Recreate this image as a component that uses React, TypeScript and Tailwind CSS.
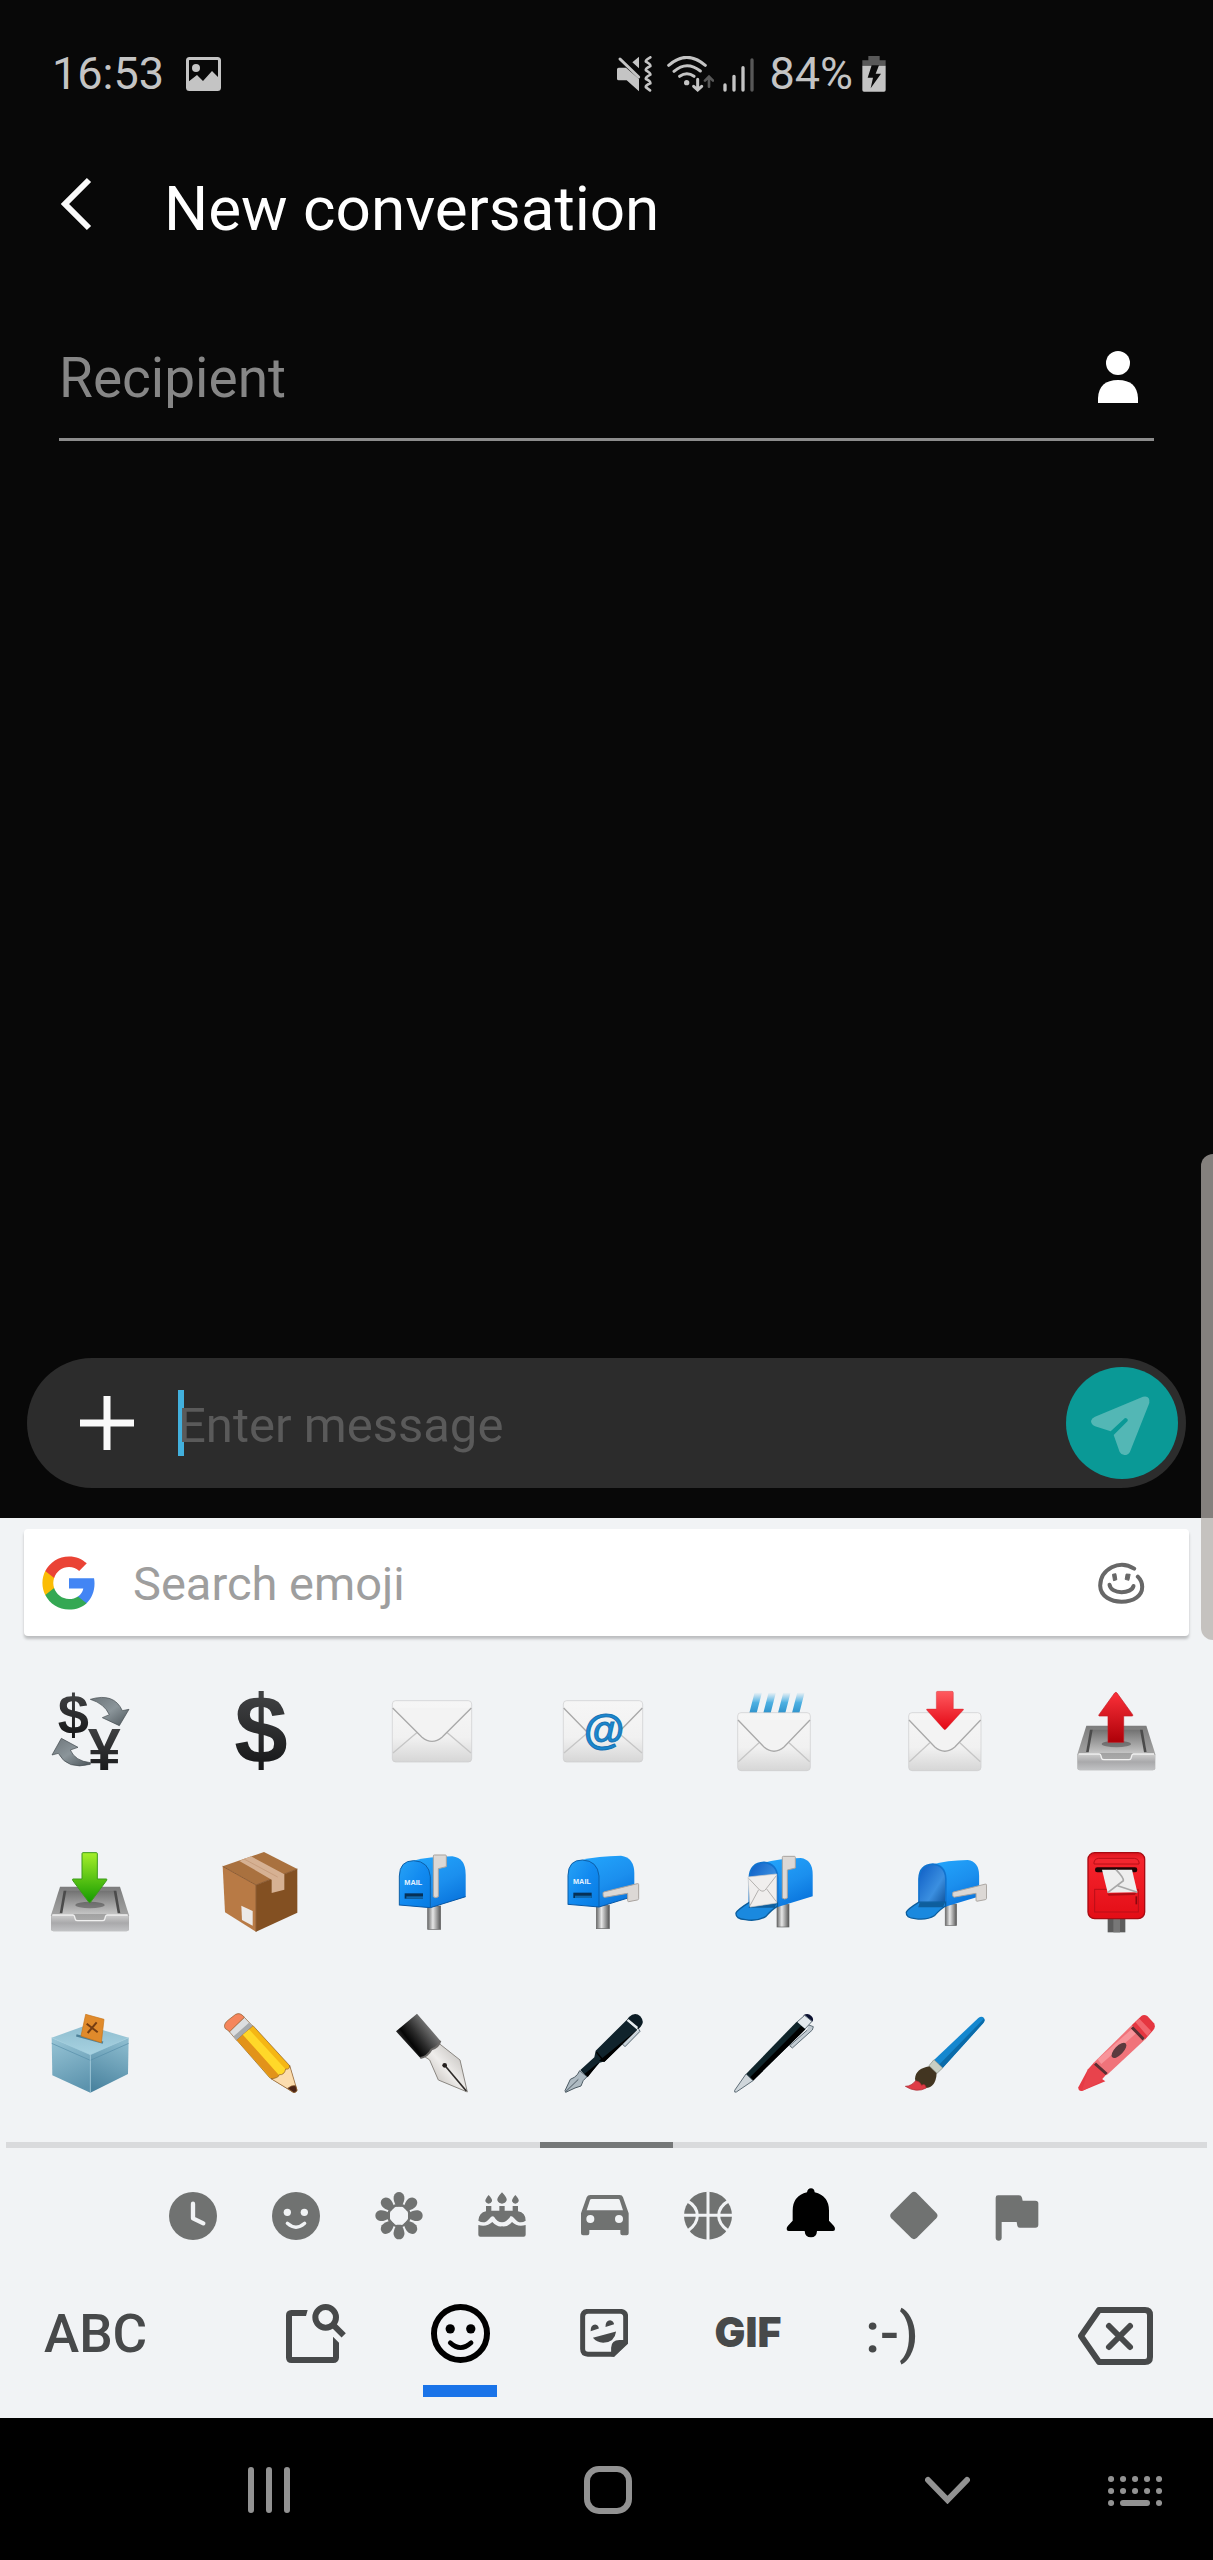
import React from "react";

type Drawing = { name: string; box: string; art: React.ReactNode };

/* Gradients shared by the emoji drawings */
function Gradients() {
  return (
    <svg className="absolute size-0" aria-hidden="true">
      <defs>
        <linearGradient id="ink" x1="0" y1="0" x2="0" y2="1">
          <stop offset="0" stopColor="#4a4b4d" />
          <stop offset="1" stopColor="#0e0f10" />
        </linearGradient>
        <linearGradient id="steel" x1="0" y1="0" x2="1" y2="1">
          <stop offset="0" stopColor="#6d757a" />
          <stop offset="0.5" stopColor="#8b959a" />
          <stop offset="1" stopColor="#4c555a" />
        </linearGradient>
        <linearGradient id="paper" x1="0" y1="0" x2="0" y2="1">
          <stop offset="0" stopColor="#f6f6f6" />
          <stop offset="0.6" stopColor="#f1f1f1" />
          <stop offset="1" stopColor="#d6d6d6" />
        </linearGradient>
        <linearGradient id="red" x1="0" y1="0" x2="0" y2="1">
          <stop offset="0" stopColor="#ff5a5f" />
          <stop offset="1" stopColor="#e30613" />
        </linearGradient>
        <linearGradient id="redUp" x1="0" y1="0" x2="0" y2="1">
          <stop offset="0" stopColor="#fb3039" />
          <stop offset="1" stopColor="#ad0008" />
        </linearGradient>
        <linearGradient id="green" x1="0" y1="0" x2="0" y2="1">
          <stop offset="0" stopColor="#a5ef2a" />
          <stop offset="1" stopColor="#149a00" />
        </linearGradient>
        <linearGradient id="tray" x1="0" y1="0" x2="0" y2="1">
          <stop offset="0" stopColor="#7c7c7c" />
          <stop offset="1" stopColor="#b9b9b9" />
        </linearGradient>
        <linearGradient id="trayFront" x1="0" y1="0" x2="0" y2="1">
          <stop offset="0" stopColor="#cfcfcf" />
          <stop offset="0.5" stopColor="#a9a9ab" />
          <stop offset="1" stopColor="#c2c3c5" />
        </linearGradient>
        <linearGradient id="trayIn" x1="0" y1="0" x2="0" y2="1">
          <stop offset="0" stopColor="#717171" />
          <stop offset="1" stopColor="#c4c4c4" />
        </linearGradient>
        <linearGradient id="blue" x1="0" y1="0" x2="1" y2="1">
          <stop offset="0" stopColor="#27a3f6" />
          <stop offset="0.5" stopColor="#128af0" />
          <stop offset="1" stopColor="#067be2" />
        </linearGradient>
        <linearGradient id="blueSide" x1="0.3" y1="0" x2="0.8" y2="1">
          <stop offset="0" stopColor="#22a2fa" />
          <stop offset="0.5" stopColor="#1b8fee" />
          <stop offset="1" stopColor="#0670da" />
        </linearGradient>
        <linearGradient id="blueIn" x1="0" y1="0" x2="1" y2="1">
          <stop offset="0" stopColor="#0c5cc4" />
          <stop offset="0.6" stopColor="#3b8fe0" />
          <stop offset="1" stopColor="#0a4c94" />
        </linearGradient>
        <linearGradient id="post" x1="0" y1="0" x2="1" y2="0">
          <stop offset="0" stopColor="#6a6a6a" />
          <stop offset="0.4" stopColor="#e6e6e6" />
          <stop offset="1" stopColor="#555" />
        </linearGradient>
        <linearGradient id="rain" x1="0" y1="0" x2="0" y2="1">
          <stop offset="0" stopColor="#4fb3e6" stopOpacity="0" />
          <stop offset="0.5" stopColor="#4db0e2" />
          <stop offset="1" stopColor="#2f93cc" />
        </linearGradient>
        <linearGradient id="boxTop" x1="0" y1="0" x2="0" y2="1">
          <stop offset="0" stopColor="#8fbdcf" />
          <stop offset="1" stopColor="#a8d3e2" />
        </linearGradient>
        <linearGradient id="boxL" x1="0.3" y1="0" x2="0.6" y2="1">
          <stop offset="0" stopColor="#93c1d3" />
          <stop offset="1" stopColor="#5c93ad" />
        </linearGradient>
        <linearGradient id="boxR" x1="0.6" y1="0" x2="0.3" y2="1">
          <stop offset="0" stopColor="#8abacd" />
          <stop offset="1" stopColor="#4a839f" />
        </linearGradient>
        <linearGradient id="barrel" x1="0.15" y1="0.75" x2="0.8" y2="0.25">
          <stop offset="0" stopColor="#4a4a4a" />
          <stop offset="0.25" stopColor="#050505" />
          <stop offset="0.5" stopColor="#2a2a2a" />
          <stop offset="1" stopColor="#828282" />
        </linearGradient>
        <linearGradient id="nib" x1="0" y1="1" x2="1" y2="0">
          <stop offset="0" stopColor="#a9a39d" />
          <stop offset="0.5" stopColor="#efedeb" />
          <stop offset="1" stopColor="#aeaba7" />
        </linearGradient>
        <linearGradient id="redBox" x1="0" y1="0" x2="0" y2="1">
          <stop offset="0" stopColor="#d9141d" />
          <stop offset="0.1" stopColor="#f5242d" />
          <stop offset="1" stopColor="#e30d16" />
        </linearGradient>
      </defs>
    </svg>
  );
}

function Envelope({ x, y, w, h, flap = true }: { x: number; y: number; w: number; h: number; flap?: boolean }) {
  const r = x + w;
  const b = y + h;
  const cx = x + w / 2;
  const fy = y + h * 0.66;
  return (
    <g>
      <rect x={x + 1} y={y + 1} width={w - 2} height={h - 2} rx="10" fill="url(#paper)" stroke="#cbcccd" strokeWidth="2" />
      <path d={`M${x + 3} ${b - 28} L${cx - 45} ${y + h * 0.52} M${r - 3} ${b - 28} L${cx + 45} ${y + h * 0.52}`} stroke="#c6c6c6" strokeWidth="4" fill="none" />
      {flap ? (
        <path d={`M${x + 2} ${y + 23} L${cx - 30} ${fy - 12} Q${cx} ${fy + 13} ${cx + 30} ${fy - 12} L${r - 2} ${y + 23}`} fill="#f3f3f3" stroke="#a9a9a9" strokeWidth="4" />
      ) : (
        <path d={`M${x + 2} ${y + 23} L${cx - 50} ${y + h * 0.5} M${cx + 50} ${y + h * 0.5} L${r - 2} ${y + 23}`} fill="none" stroke="#a9a9a9" strokeWidth="4" />
      )}
    </g>
  );
}

function Tray({ x, y }: { x: number; y: number }) {
  return (
    <g transform={`translate(${x} ${y})`}>
      <path d="M27 0 H207 L234 86 V128 Q234 134 227 134 H7 Q0 134 0 128 V86 Z" fill="url(#tray)" />
      <path d="M38 12 H196 L208 82 H26 Z" fill="url(#trayIn)" />
      <path d="M38 12 L46 12 L34 80 H26 Z M196 12 L188 12 L200 80 H208 Z" fill="#4b4b4b" />
      <path d="M1 88 Q3 84 10 84 H66 Q70 84 71 90 L73 98 Q74 102 80 102 H154 Q160 102 161 98 L163 90 Q164 84 168 84 H224 Q231 84 233 88 V127 Q233 134 226 134 H8 Q1 134 1 127 Z" fill="url(#trayFront)" />
      <path d="M4 85 H66 Q70 85 71 91 L73 98 Q74 102 80 102 H154 Q160 102 161 98 L163 91 Q164 85 168 85 H230" fill="none" stroke="#f0f0f0" strokeWidth="4" />
      <ellipse cx="117" cy="55" rx="44" ry="10" fill="#000" opacity="0.3" />
    </g>
  );
}

function Flag({ up, x, y }: { up: boolean; x: number; y: number }) {
  return up ? (
    <path transform={`translate(${x} ${y})`} d="M2 4 Q2 1 5 1 H38 Q41 1 41 4 V36 L17 42 V126 Q9 132 2 126 Z" fill="#dcd8d5" stroke="#a9a39f" strokeWidth="3" />
  ) : (
    <path transform={`translate(${x} ${y})`} d="M3 28 L104 3 Q108 2 108 6 V48 Q108 51 104 52 L78 57 Q75 57 75 54 V32 L6 44 Q0 44 1 33 Q1 29 3 28 Z" fill="#dcd8d5" stroke="#a9a39f" strokeWidth="3" />
  );
}

/* Closed mailbox: front at the left, rounded body going back to the right */
function Mailbox({ x, y }: { x: number; y: number }) {
  return (
    <g transform={`translate(${x} ${y})`}>
      <rect x="86" y="150" width="39" height="70" fill="url(#post)" stroke="#666" strokeWidth="2" />
      <path d="M42 14 Q90 2 160 1 Q200 6 200 55 V122 L94 155 L60 120 Z" fill="url(#blueSide)" />
      <path d="M1 60 Q2 14 44 14 Q90 16 94 62 V155 L1 147 Z" fill="url(#blue)" />
      <path d="M1 148 V60 Q2 14 44 14 Q90 16 94 62 V155" fill="none" stroke="#0d5fa8" strokeWidth="3" />
      <path d="M1 147 L94 155 L200 122" fill="none" stroke="#0757a6" strokeWidth="3" />
      <text x="16" y="86" className="font-['Liberation_Sans'] text-[22px] font-bold" fill="#e6f3ff">MAIL</text>
      <path d="M17 112 H72 V128 H17 Z" fill="#063056" />
      <path d="M22 121 H72 V128 H22 Z" fill="#0f67ad" />
    </g>
  );
}

/* Mailbox with its door down */
function OpenMailbox({ x, y, letter }: { x: number; y: number; letter: boolean }) {
  return (
    <g transform={`translate(${x} ${y})`}>
      <rect x="125" y="140" width="36" height="68" fill="url(#post)" stroke="#666" strokeWidth="2" />
      <path d="M82 16 Q130 2 196 1 Q232 6 232 50 V116 L127 148 L100 80 Z" fill="url(#blueSide)" />
      <path d="M42 140 V60 Q44 16 86 14 Q125 18 127 60 V148 Z" fill="url(#blueIn)" />
      <path d="M42 140 V60 Q44 16 86 14 Q125 18 127 60 V148" fill="none" stroke="#1173cf" strokeWidth="5" />
      <path d="M42 134 H126 V146 Q110 155 92 176 Q66 192 30 186 Q0 184 2 166 Q6 156 42 134 Z" fill="#1a89df" stroke="#0c5c9b" strokeWidth="4" />
      <path d="M44 136 H124 L118 150 H40 Z" fill="#0a4c80" opacity="0.7" />
      {letter && (
        <g>
          <path d="M38 58 L124 49 V136 L44 148 Z" fill="#f0eeed" stroke="#cfcbc9" strokeWidth="2" />
          <path d="M40 62 L72 96 Q84 106 92 94 L123 54 M44 144 L70 96 M123 132 L94 94" fill="none" stroke="#b5b2b0" strokeWidth="3" />
        </g>
      )}
    </g>
  );
}

const emojis: Drawing[] = [
  {
    name: "Currency exchange",
    box: "153 92 240 240",
    art: (
      <g>
        <text x="223" y="220" textAnchor="middle" className="font-['Liberation_Sans'] text-[168px] font-bold" fill="url(#ink)">$</text>
        <text x="316" y="330" textAnchor="middle" className="font-['Liberation_Sans'] text-[178px] font-bold" fill="url(#ink)">¥</text>
        <path d="M274 117 Q345 96 370 151 L390 147 L361 196 L310 172 L331 163 Q316 130 274 117 Z" fill="url(#steel)" stroke="#3f474c" strokeWidth="2" />
        <path d="M274 312 Q205 330 178 279 L159 284 L187 234 L237 261 L214 269 Q228 302 274 307 Z" fill="url(#steel)" stroke="#3f474c" strokeWidth="2" />
      </g>
    ),
  },
  {
    name: "Dollar",
    box: "668 92 240 240",
    art: <text x="788" y="308" textAnchor="middle" className="font-['Liberation_Sans'] text-[288px] font-bold" fill="url(#ink)">$</text>,
  },
  { name: "Envelope", box: "1179 92 240 240", art: <Envelope x={1179} y={120} w={240} h={186} /> },
  {
    name: "E-mail",
    box: "642 92 240 240",
    art: (
      <g>
        <Envelope x={642} y={120} w={240} h={186} flap={false} />
        <text x="763" y="252" textAnchor="middle" className="font-['Liberation_Sans'] text-[124px] font-bold italic" fill="#1b87cf" stroke="#1673b4" strokeWidth="3">@</text>
      </g>
    ),
  },
  {
    name: "Incoming envelope",
    box: "106 92 240 240",
    art: (
      <g>
        <path d="M168 96 H190 L174 158 H152 Z M210 96 H232 L216 158 H194 Z M254 96 H276 L260 158 H238 Z M296 96 H318 L302 158 H280 Z" fill="url(#rain)" />
        <Envelope x={116} y={156} w={220} h={176} />
      </g>
    ),
  },
  {
    name: "Envelope with arrow",
    box: "620 92 240 240",
    art: (
      <g>
        <Envelope x={630} y={156} w={219} h={176} />
        <path d="M714 96 Q714 93 718 93 H761 Q765 93 765 97 V146 H794 Q797 146 795 149 L743 206 Q739 210 736 206 L685 149 Q683 146 687 146 H714 Z" fill="url(#red)" stroke="#c91a22" strokeWidth="1" />
      </g>
    ),
  },
  {
    name: "Outbox tray",
    box: "1130 92 240 240",
    art: (
      <g>
        <Tray x={1134} y={196} />
        <path d="M1226 246 V167 H1200 Q1197 167 1199 163 L1246 98 Q1250 94 1253 98 L1300 163 Q1302 167 1298 167 H1273 V246 Z" fill="url(#redUp)" stroke="#c41a22" strokeWidth="2" />
      </g>
    ),
  },
  {
    name: "Inbox tray",
    box: "153 575 240 240",
    art: (
      <g>
        <Tray x={156} y={679} />
        <path d="M249 580 Q249 577 252 577 H292 Q295 577 295 580 V656 H322 Q325 656 323 660 L275 725 Q272 729 269 725 L221 660 Q219 656 222 656 H249 Z" fill="url(#green)" stroke="#3c9a1b" strokeWidth="3" />
      </g>
    ),
  },
  {
    name: "Package",
    box: "668 575 240 240",
    art: (
      <g>
        <path d="M673 618 L797 575 L897 626 L773 674 Z" fill="#a9713f" />
        <path d="M673 618 L773 674 V814 L680 756 Z" fill="#b87a45" />
        <path d="M897 626 L773 674 V814 L897 757 Z" fill="#835022" />
        <path d="M673 618 L773 674 L897 626 M773 674 V814" fill="none" stroke="#8c5c34" strokeWidth="3" />
        <path d="M723 602 L758 588 L858 642 V688 L820 698 V658 Z" fill="#d6b193" />
        <path d="M737 596 L838 650" stroke="#c09473" strokeWidth="2" />
        <path d="M729 736 L763 752 V796 L731 779 Z" fill="#ece9e7" />
      </g>
    ),
  },
  { name: "Closed mailbox with raised flag", box: "1179 575 240 240", art: <g><Mailbox x={1200} y={587} /><Flag up x={1301} y={583} /></g> },
  { name: "Closed mailbox with lowered flag", box: "642 575 240 240", art: <g><Mailbox x={656} y={585} /><Flag up={false} x={761} y={667} /></g> },
  { name: "Open mailbox with raised flag", box: "106 575 240 240", art: <g><OpenMailbox x={110} y={592} letter /><Flag up x={249} y={587} /></g> },
  {
    name: "Open mailbox with lowered flag",
    box: "620 575 240 240",
    art: (
      <g>
        <g transform="translate(31 30) scale(0.95)"><OpenMailbox x={622} y={598} letter={false} /></g>
        <g transform="translate(38 34) scale(0.95)"><Flag up={false} x={762} y={668} /></g>
      </g>
    ),
  },
  {
    name: "Postbox",
    box: "1130 575 240 240",
    art: (
      <g>
        <rect x="1225" y="770" width="53" height="46" fill="#5c5c5c" />
        <rect x="1242" y="776" width="20" height="40" fill="#777" />
        <rect x="1166" y="577" width="170" height="198" rx="20" fill="url(#redBox)" stroke="#a80a12" strokeWidth="4" />
        <path d="M1184 605 Q1186 594 1198 594 H1305 Q1317 594 1319 605 V611 H1184 Z" fill="#f3262f" stroke="#b80e16" strokeWidth="3" />
        <rect x="1187" y="621" width="127" height="15" rx="7" fill="#210305" />
        <rect x="1186" y="687" width="131" height="68" fill="none" stroke="#b90f18" strokeWidth="3" />
        <path d="M1311 708 V732" stroke="#8a070e" strokeWidth="5" />
        <path d="M1224 700 L1312 697 L1306 704 L1228 706 Z" fill="#8a070e" opacity="0.6" />
        <path d="M1208 628 H1298 L1314 696 L1225 697 Z" fill="#eee" />
        <path d="M1225 697 L1272 661 Q1274 653 1250 628 M1255 676 L1314 696" fill="none" stroke="#a8a8a8" strokeWidth="5" />
      </g>
    ),
  },
  {
    name: "Ballot box",
    box: "153 1057 240 240",
    art: (
      <g>
        <path d="M158 1131 L262 1094 L389 1131 L274 1186 Z" fill="url(#boxTop)" />
        <path d="M158 1131 L274 1182 V1296 L160 1244 Z" fill="url(#boxL)" />
        <path d="M389 1131 L274 1182 V1296 L387 1240 Z" fill="url(#boxR)" />
        <path d="M158 1148 L274 1199 L389 1148" fill="none" stroke="#558da8" strokeWidth="2" />
        <path d="M158 1131 L274 1182 L389 1131 M274 1182 V1296" fill="none" stroke="#a6d0df" strokeWidth="2" />
        <path d="M232 1124 L312 1146" stroke="#4d8098" strokeWidth="7" />
        <path d="M260 1061 L315 1076 L307 1146 L246 1126 Z" fill="#e08a2b" stroke="#c87417" strokeWidth="2" />
        <path d="M263 1089 L296 1115 M293 1085 L266 1117" stroke="#743d12" strokeWidth="6" />
      </g>
    ),
  },
  {
    name: "Pencil",
    box: "668 1057 240 240",
    art: (
      <g stroke="#8a5a2c" strokeWidth="2" strokeLinejoin="round">
        <path d="M715 1138 L764 1095 L873 1214 L895 1290 Q892 1297 884 1294 L814 1251 Z" fill="#f5b614" />
        <path d="M733 1122 L752 1106 L864 1228 L845 1247 Z" fill="#ffd829" stroke="none" />
        <path d="M715 1138 L733 1122 L843 1245 L822 1256 Z" fill="#e2931a" stroke="none" />
        <path d="M818 1254 Q840 1253 843 1242 Q858 1244 862 1225 Q874 1228 874 1214 L896 1288 Q893 1297 885 1295 Z" fill="#fbdcae" />
        <path d="M868 1283 Q880 1272 892 1275 L896 1289 Q893 1297 885 1295 Z" fill="#4a2417" />
        <path d="M692 1112 L738 1070 L762 1095 L714 1138 Z" fill="#dcdee0" />
        <path d="M706 1127 L752 1086 L762 1095 L714 1138 Z" fill="#a6aaad" stroke="none" />
        <path d="M680 1103 Q674 1090 690 1078 L712 1061 Q726 1054 738 1070 L694 1113 Z" fill="#f5855c" />
      </g>
    ),
  },
  {
    name: "Black nib",
    box: "1179 1057 240 240",
    art: (
      <g strokeLinejoin="round">
        <path d="M1268 1182 L1312 1142 L1383 1198 L1405 1294 L1318 1258 L1292 1198 Z" fill="url(#nib)" stroke="#8b8782" strokeWidth="3" />
        <path d="M1191 1112 L1254 1059 L1324 1140 Q1320 1158 1298 1166 Q1284 1190 1264 1192 Z" fill="url(#barrel)" />
        <path d="M1264 1192 Q1284 1190 1298 1166 Q1320 1158 1324 1140" fill="none" stroke="#6b6866" strokeWidth="6" />
        <path d="M1337 1214 L1402 1291" stroke="#2e2b29" strokeWidth="5" />
        <circle cx="1337" cy="1214" r="7" fill="#25211f" />
      </g>
    ),
  },
  {
    name: "Fountain pen",
    box: "642 1057 240 240",
    art: (
      <g strokeLinejoin="round">
        <path d="M870 1106 L873 1112 L828 1158 L820 1150" fill="#c9d3da" stroke="#5d6b75" strokeWidth="3" />
        <path d="M833 1078 L865 1107 L768 1202 L752 1206 L714 1250 L694 1228 L736 1190 L740 1170 Z" fill="#10232c" />
        <path d="M750 1200 L865 1107 L766 1204 Z M706 1240 L752 1203 L716 1250 Z" fill="#000" />
        <path d="M840 1069 Q858 1052 874 1067 Q888 1084 875 1098 L868 1106 L834 1077 Z" fill="#0c1c25" />
        <path d="M836 1078 L865 1102" stroke="#e6ecf0" strokeWidth="7" />
        <path d="M742 1174 L762 1198" stroke="#000" strokeWidth="4" />
        <path d="M692 1230 L714 1248 Q700 1258 696 1276 L678 1282 L650 1295 L648 1290 L664 1256 L676 1250 Q686 1244 692 1230 Z" fill="#aebac2" stroke="#4c5a63" strokeWidth="3" />
        <path d="M650 1293 L688 1256" stroke="#4c5a63" strokeWidth="3" />
      </g>
    ),
  },
  {
    name: "Pen",
    box: "106 1057 240 240",
    art: (
      <g strokeLinejoin="round">
        <path d="M328 1092 L344 1098 L341 1108 L281 1162 L273 1155 L326 1108" fill="#c3ccd3" stroke="#5f6d77" strokeWidth="3" />
        <path d="M314 1064 Q328 1055 338 1066 Q346 1074 342 1082 L334 1086 Z" fill="#0b1030" />
        <path d="M295 1084 L318 1064 L340 1082 L318 1106 Z" fill="#e3e8ec" stroke="#5f6d77" strokeWidth="3" />
        <path d="M294 1083 L320 1106 L163 1260 L142 1240 Z" fill="#10252b" />
        <path d="M307 1096 L320 1106 L163 1260 L154 1250 Z" fill="#000" />
        <path d="M142 1240 L163 1260 L113 1294 Q106 1297 108 1289 Z" fill="#cfd6db" stroke="#5f6d77" strokeWidth="3" />
      </g>
    ),
  },
  {
    name: "Paintbrush",
    box: "620 1057 240 240",
    art: (
      <g strokeLinejoin="round">
        <path d="M840 1072 Q850 1064 857 1072 Q861 1079 855 1087 L733 1222 L707 1198 Z" fill="#1487cf" />
        <path d="M857 1074 Q861 1079 855 1087 L733 1222 L722 1212 Z" fill="#0b6ba9" />
        <path d="M707 1197 L733 1222 L716 1238 L692 1215 Z" fill="#c9cfc3" stroke="#7f877c" strokeWidth="2" />
        <path d="M693 1217 L715 1238 Q712 1282 682 1282 Q650 1278 650 1254 Q652 1224 693 1217 Z" fill="#423521" />
        <path d="M621 1277 Q640 1276 652 1260 Q666 1262 670 1274 Q680 1266 684 1282 Q654 1298 621 1277 Z" fill="#df3c46" stroke="#a72730" strokeWidth="2" />
      </g>
    ),
  },
  {
    name: "Crayon",
    box: "1130 1057 240 240",
    art: (
      <g strokeLinejoin="round">
        <path d="M1166 1226 L1218 1262 L1148 1291 Q1136 1292 1137 1280 Z" fill="#e63b45" />
        <path d="M1166 1226 L1185 1205 L1222 1240 L1201 1264 L1148 1291 Z" fill="#e8434c" />
        <path d="M1183 1206 L1297 1094 L1338 1136 L1222 1244 Z" fill="#f0737a" />
        <path d="M1195 1196 L1303 1100 L1316 1113 L1206 1210 Z" fill="#f8949a" />
        <path d="M1297 1094 L1326 1066 Q1334 1060 1344 1066 L1364 1088 Q1370 1098 1362 1108 L1338 1136 Z" fill="#e53640" />
        <path d="M1308 1084 L1320 1074 L1356 1112 L1344 1126 Z" fill="#f1656d" />
        <path d="M1298 1100 L1333 1136 M1187 1209 L1222 1240" stroke="#5b2f33" strokeWidth="9" />
        <ellipse cx="1259" cy="1169" rx="29" ry="13" transform="rotate(-46 1259 1169)" fill="#5c3a3e" />
      </g>
    ),
  },
];

const grey = "#707271";
const bg = "#f1f3f5";

const categories: Drawing[] = [
  {
    name: "Recent",
    box: "31 36 144 144",
    art: (
      <g>
        <circle cx="103" cy="108" r="72" fill={grey} />
        <path d="M103 71 V115 L134 130" fill="none" stroke={bg} strokeWidth="13" strokeLinecap="round" strokeLinejoin="round" />
      </g>
    ),
  },
  {
    name: "Smileys",
    box: "339 36 144 144",
    art: (
      <g>
        <circle cx="411" cy="108" r="72" fill={grey} />
        <circle cx="385" cy="97" r="11" fill={bg} />
        <circle cx="436" cy="97" r="11" fill={bg} />
        <path d="M385 130 Q411 153 437 130" fill="none" stroke={bg} strokeWidth="10" strokeLinecap="round" />
      </g>
    ),
  },
  {
    name: "Nature",
    box: "646 36 144 144",
    art: (
      <g fill={grey}>
        {[0, 45, 90, 135, 180, 225, 270, 315].map((a) => (
          <path key={a} transform={`rotate(${a} 718 107)`} d="M711 80 Q700 62 702 50 Q706 36 718 36 Q730 36 734 50 Q736 62 725 80 Z" />
        ))}
        <circle cx="718" cy="107" r="32" fill="none" stroke={grey} strokeWidth="7" />
      </g>
    ),
  },
  {
    name: "Food",
    box: "954 36 144 144",
    art: (
      <g fill={grey}>
        <path d="M978 94 V78 H994 V92 H1018 V78 H1034 V92 H1058 V78 H1074 V94 Q1097 98 1097 122 Q1078 134 1064 116 Q1058 108 1052 108 Q1040 127 1026 127 Q1012 127 1002 110 Q996 106 988 116 Q974 134 955 122 Q957 98 978 94 Z" />
        <path d="M955 135 Q980 142 997 126 Q1012 142 1026 139 Q1042 142 1056 126 Q1072 142 1097 135 V164 Q1097 170 1091 170 H961 Q955 170 955 164 Z" />
        <path d="M986 45 Q998 58 996 64 Q993 71 986 71 Q979 71 976 64 Q975 58 986 45 Z M1066 45 Q1078 58 1076 64 Q1073 71 1066 71 Q1059 71 1056 64 Q1055 58 1066 45 Z M1026 37 Q1042 54 1040 61 Q1036 71 1026 71 Q1016 71 1012 61 Q1010 54 1026 37 Z" />
      </g>
    ),
  },
  {
    name: "Travel",
    box: "1263 36 144 144",
    art: (
      <path
        fill={grey}
        fillRule="evenodd"
        d="M1280 52 Q1283 45 1291 45 H1379 Q1387 45 1389 52 L1406 100 V160 Q1406 166 1400 166 H1387 Q1381 166 1381 160 V150 H1288 V160 Q1288 166 1282 166 H1269 Q1263 166 1263 160 V100 Z M1295 57 Q1291 57 1290 60 L1280 91 H1389 L1379 60 Q1378 57 1375 57 Z M1303 117 A12 12 0 1 0 1279 117 A12 12 0 1 0 1303 117 Z M1389 117 A12 12 0 1 0 1365 117 A12 12 0 1 0 1389 117 Z"
      />
    ),
  },
  {
    name: "Activities",
    box: "370 36 144 144",
    art: (
      <g fill="none" stroke={bg} strokeWidth="9">
        <circle cx="442" cy="107" r="72" fill={grey} stroke="none" />
        <path d="M442 34 V180 M368 106 H516 M379 62 Q410 80 410 107 Q410 132 382 152 M505 62 Q474 80 474 107 Q474 132 502 152" />
      </g>
    ),
  },
  {
    name: "Objects",
    box: "681 36 144 144",
    art: <path d="M741 37 Q743 25 753 25 Q763 25 764 37 Q807 48 807 92 V122 L821 137 Q825 141 825 147 Q825 153 819 153 H771 Q770 172 753 172 Q735 172 734 153 H686 Q680 153 680 147 Q680 141 684 137 L698 122 V92 Q698 48 741 37 Z" fill="#000" />,
  },
  {
    name: "Symbols",
    box: "990 36 144 144",
    art: <path d="M1054 39 Q1062 32 1070 39 L1129 99 Q1136 107 1129 115 L1070 174 Q1062 181 1054 174 L994 115 Q987 107 994 99 Z" fill={grey} />,
  },
  {
    name: "Flags",
    box: "1304 36 144 144",
    art: <path d="M1312 53 Q1312 46 1319 46 H1382 Q1389 46 1391 53 L1393 62 H1431 Q1440 62 1440 70 V134 Q1440 143 1431 143 H1384 Q1378 143 1377 137 L1375 126 H1330 V174 Q1329 182 1321 182 Q1313 182 1312 174 Z" fill={grey} />,
  },
];

function Icon({ d, className }: { d: Drawing; className: string }) {
  return (
    <svg viewBox={d.box} className={className} aria-hidden="true">
      {d.art}
    </svg>
  );
}

function StatusBar() {
  return (
    <header className="flex h-[148px] items-center text-[45px] text-[#c4c4c4]">
      <div className="flex basis-1/2 items-center gap-[22px] pl-[52px]">
        <span>16:53</span>
        <svg viewBox="0 0 35 34" className="h-[34px] w-[35px]" aria-label="Picture saved">
          <rect x="1.5" y="1.5" width="32" height="31" rx="2" fill="none" stroke="#c4c4c4" strokeWidth="3" />
          <circle cx="10" cy="11" r="4" fill="#c4c4c4" />
          <path d="M2 25 L11 18 L17 24 L26 14 L33 21 V32 H2 Z" fill="#c4c4c4" />
        </svg>
      </div>
      <div className="flex items-center pl-[10px]">
        <svg viewBox="81 45 105 108" className="h-9 w-[35px]" aria-label="Muted">
          <path d="M86 80 H108 L147 114 V151 L110 118 H86 Q81 118 81 113 V85 Q81 80 86 80 Z M147 47 V82 L127 64 Z" fill="#c4c4c4" />
          <path d="M90 54 L146 108" stroke="#c4c4c4" strokeWidth="9" strokeLinecap="round" />
          <path d="M181 49 Q165 58 168 62 Q182 70 181 75 Q165 83 168 88 Q182 96 181 101 Q165 109 168 114 Q182 121 181 127 Q165 134 168 139 L180 148" fill="none" stroke="#c4c4c4" strokeWidth="8" strokeLinecap="round" />
        </svg>
        <svg viewBox="231 45 141 108" className="ml-[15px] h-9 w-[47px]" aria-label="Wi-Fi">
          <g fill="none" stroke="#c4c4c4" strokeWidth="9" strokeLinecap="round">
            <path d="M236 73 Q290 25 346 73 M252 91 Q290 58 331 90 M269 106 Q291 91 312 106" />
            <path d="M323 115 V146 M311 136 L323 147 L335 136" />
          </g>
          <path d="M357 137 V108 M345 119 L357 107 L369 119" fill="none" stroke="#585858" strokeWidth="8" strokeLinecap="round" />
          <circle cx="290" cy="125" r="8" fill="#c4c4c4" />
        </svg>
        <svg viewBox="400 45 93 108" className="ml-[9px] h-9 w-[31px]" aria-label="Signal">
          <path d="M406 132 V147 M433 106 V147 M460 80 V147" stroke="#c4c4c4" strokeWidth="10" strokeLinecap="round" />
          <path d="M487 57 V147" stroke="#585858" strokeWidth="10" strokeLinecap="round" />
        </svg>
        <span className="ml-4">84%</span>
        <svg viewBox="818 45 70 108" className="ml-[9px] h-9 w-6" aria-label="Charging">
          <path d="M836 45 H870 V58 H888 V74 H818 V58 H836 Z" fill="#585858" />
          <path d="M818 74 H888 V147 Q888 152 883 152 H823 Q818 152 818 147 Z" fill="#c4c4c4" />
          <path d="M846 73 H868 L858 98 H874 L843 142 L850 110 H834 Z" fill="#0b0b0b" />
        </svg>
      </div>
    </header>
  );
}

function Composer() {
  return (
    <form className="mx-[27px] mb-[30px] flex h-[130px] items-center rounded-full bg-[#2c2c2c] pr-2 pl-[53px]" onSubmit={(e) => e.preventDefault()}>
      <button type="button" aria-label="Add attachment">
        <svg viewBox="0 0 54 54" className="size-[54px]">
          <path d="M27 0 V54 M0 27 H54" stroke="#fafafa" strokeWidth="7" />
        </svg>
      </button>
      <span className="-mr-1.5 ml-11 h-[66px] w-1.5 bg-[#42b0dd]" />
      <input aria-label="Message" placeholder="Enter message" className="relative min-w-0 flex-1 bg-transparent pt-1.5 text-[49px] text-white outline-none placeholder:text-[#5a5a5a]" />
      <button type="submit" aria-label="Send">
        <svg viewBox="77 50 336 336" className="size-28">
          <circle cx="245" cy="218" r="168" fill="#0a9996" />
          <path d="M164 199 L308 139 Q330 134 327 158 L269 304 Q264 314 252 314 Q242 313 238 305 L220 254 L262 212 Q264 204 254 203 L211 243 L164 228 Q152 222 152 212 Q154 203 164 199 Z" fill="#53b7b5" strokeLinejoin="round" />
        </svg>
      </button>
    </form>
  );
}

function SearchBar() {
  return (
    <label className="mx-6 flex h-[107px] items-center rounded bg-white pr-11 pl-4 shadow-[0_3px_3px_rgba(0,0,0,0.22)]">
      <svg viewBox="0 0 24 24" className="size-[58px]" aria-label="Google">
        <path fill="#4285F4" d="M22.56 12.25c0-.78-.07-1.53-.2-2.25H12v4.26h5.92c-.26 1.37-1.04 2.53-2.21 3.31v2.77h3.57c2.08-1.92 3.28-4.74 3.28-8.09z" />
        <path fill="#34A853" d="M12 23c2.97 0 5.46-.98 7.28-2.66l-3.57-2.77c-.98.66-2.23 1.06-3.71 1.06-2.86 0-5.29-1.93-6.16-4.53H2.18v2.84C3.99 20.53 7.7 23 12 23z" />
        <path fill="#FBBC05" d="M5.84 14.09c-.22-.66-.35-1.36-.35-2.09s.13-1.43.35-2.09V7.07H2.18C1.43 8.55 1 10.22 1 12s.43 3.45 1.18 4.93l3.66-2.84z" />
        <path fill="#EA4335" d="M12 5.38c1.62 0 3.06.56 4.21 1.64l3.15-3.15C17.45 2.09 14.97 1 12 1 7.7 1 3.99 3.47 2.18 7.07l3.66 2.84c.87-2.6 3.3-4.53 6.16-4.53z" />
      </svg>
      <input aria-label="Search emoji" placeholder="Search emoji" className="ml-[35px] min-w-0 flex-1 bg-transparent pt-1 text-[47px] text-black outline-none placeholder:text-[#9e9e9e]" />
      <svg viewBox="176 634 140 126" className="h-[42px] w-[47px]" aria-hidden="true">
        <g fill="none" stroke="#676767" strokeWidth="12" strokeLinecap="round">
          <path d="M284 654 C240 625 183 655 182 705 C183 738 215 753 246 753 C282 753 309 735 308 708 C308 694 303 686 295 678" />
          <path d="M210 702 C215 733 277 730 282 706" />
        </g>
        <path d="M219 671 L229 669 L232 687 L222 690 Z M260 670 L272 671 L268 689 L257 686 Z" fill="#676767" stroke="#676767" strokeWidth="3" strokeLinejoin="round" />
      </svg>
    </label>
  );
}

function ModeRow() {
  return (
    <nav className="flex h-[134px] text-[#47494a]" aria-label="Keyboard modes">
      <button className="flex h-[102px] w-[244px] items-center pl-11 text-[53px] font-medium">ABC</button>
      <div className="grid flex-1 grid-cols-5">
        <button className="flex h-[98px] items-center justify-center" aria-label="Search images">
          <svg viewBox="382 369 180 177" className="h-[59px] w-[60px]">
            <path d="M447 387 H398 Q382 388 382 403 V530 Q383 546 398 546 H524 Q540 545 541 530 V485 L523 467 V528 H400 V405 H442 Z" fill="#47494a" />
            <circle cx="501" cy="409" r="31" fill="none" stroke="#47494a" strokeWidth="18" />
            <path d="M522 430 L555 463" stroke="#47494a" strokeWidth="18" />
          </svg>
        </button>
        <button className="flex flex-col items-center" aria-label="Emoji">
          <span className="flex h-[98px] items-center">
            <svg viewBox="813 369 178 178" className="size-[59px]">
              <circle cx="902" cy="458" r="80" fill="none" stroke="#000" strokeWidth="18" />
              <circle cx="871" cy="444" r="14" />
              <circle cx="933" cy="444" r="14" />
              <path d="M871 486 Q902 515 934 486" fill="none" stroke="#000" strokeWidth="14" strokeLinecap="round" />
            </svg>
          </span>
          <span className="mt-[3px] h-3 w-[74px] bg-[#1a73e8]" />
        </button>
        <button className="flex h-[98px] items-center justify-center" aria-label="Stickers">
          <svg viewBox="1263 387 145 145" className="size-12">
            <path d="M1287 394 H1385 Q1401 395 1401 411 V488 L1363 524 H1287 Q1271 523 1271 508 V410 Q1271 395 1287 394 Z" fill="none" stroke="#47494a" strokeWidth="15" />
            <path d="M1357 530 V504 Q1358 481 1382 481 H1408 V488 L1366 531 Z M1302 474 L1372 455 Q1368 488 1333 489 Q1313 488 1302 474 Z M1295 454 Q1295 434 1309 434 Q1319 436 1320 446 Z M1340 441 Q1340 421 1354 421 Q1364 423 1366 433 Z" fill="#47494a" />
          </svg>
        </button>
        <button className="flex h-[98px] items-center justify-center font-['Inter'] text-[41px] font-black">GIF</button>
        <button className="flex h-[98px] items-center justify-center text-[56px] font-medium">:-)</button>
      </div>
      <button className="flex h-[104px] w-[249px] items-center justify-end pr-[60px]" aria-label="Delete">
        <svg viewBox="0 0 75 58" className="h-[58px] w-[75px]" fill="none" stroke="#47494a" strokeWidth="6" strokeLinejoin="round" strokeLinecap="round">
          <path d="M21 3 H67 Q72 3 72 8 V50 Q72 55 67 55 H21 L3 29 Z" />
          <path d="M31 19 L52 40 M52 19 L31 40" />
        </svg>
      </button>
    </nav>
  );
}

function NavigationBar() {
  return (
    <footer className="flex h-[142px] items-center bg-black pt-0.5 pr-[51px] pl-[248px]">
      <div className="mr-[138px] flex flex-1 items-center justify-between">
        <button aria-label="Recent apps">
          <svg viewBox="0 0 42 46" className="h-[46px] w-[42px]">
            <path d="M3 3 V43 M21 3 V43 M39 3 V43" stroke="#929292" strokeWidth="6" strokeLinecap="round" />
          </svg>
        </button>
        <button aria-label="Home" className="size-12 rounded-[15px] border-6 border-[#929292]" />
        <button aria-label="Hide keyboard">
          <svg viewBox="0 0 45 28" className="h-7 w-[45px]">
            <path d="M3 4 L22.5 24 L42 4" fill="none" stroke="#929292" strokeWidth="6" strokeLinecap="round" />
          </svg>
        </button>
      </div>
      <button aria-label="Change keyboard">
        <svg viewBox="0 0 54 31" className="h-[31px] w-[54px]" stroke="#929292" strokeWidth="6" strokeLinecap="round">
          <path d="M3 4h.1M15 4h.1M27 4h.1M39 4h.1M51 4h.1M3 16h.1M15 16h.1M27 16h.1M39 16h.1M51 16h.1M3 28h.1M15 28h24M51 28h.1" />
        </svg>
      </button>
    </footer>
  );
}

export default function App() {
  return (
    <div className="relative flex min-h-screen flex-col bg-[#080808] font-['Roboto',sans-serif]">
      <Gradients />
      <StatusBar />
      <div className="flex h-[120px] items-center pl-[60px] text-white">
        <button aria-label="Back" className="mb-2">
          <svg viewBox="0 0 32 54" className="h-[54px] w-8">
            <path d="M29 3 L5 27 L29 51" fill="none" stroke="#fafafa" strokeWidth="6" />
          </svg>
        </button>
        <h1 className="ml-[72px] text-[62px]">New conversation</h1>
      </div>
      <label className="mx-[59px] mt-[50px] flex h-[123px] items-center border-b-3 border-[#8c8c8c] pr-4">
        <input aria-label="Recipient" placeholder="Recipient" className="min-w-0 flex-1 bg-transparent text-[55px] text-white outline-none placeholder:text-[#868686]" />
        <svg viewBox="0 0 40 52" className="mb-0.5 h-[52px] w-10" aria-hidden="true">
          <circle cx="20" cy="12" r="12" fill="#fff" />
          <path d="M0 52 V47 Q1 29 20 29 Q39 29 40 47 V52 Z" fill="#fff" />
        </svg>
      </label>
      <main className="flex-1" />
      <Composer />
      <section className="bg-[#f1f3f5] pt-[11px]" aria-label="Emoji keyboard">
        <SearchBar />
        <div className="mt-3.5 grid grid-cols-7 pr-3 pl-1">
          {emojis.map((e) => (
            <button key={e.name} aria-label={e.name} className="flex h-[161px] items-center justify-center">
              <Icon d={e} className="size-20 overflow-visible" />
            </button>
          ))}
        </div>
        <div className="mx-1.5 mt-[9px] grid grid-cols-9 bg-[#d9dadc]">
          <div className="col-start-5 h-1.5 bg-[#757778]" />
        </div>
        <div className="mr-[145px] ml-[141px] grid h-[136px] grid-cols-9">
          {categories.map((c) => (
            <button key={c.name} aria-label={c.name} className="flex items-center justify-center">
              <Icon d={c} className="size-12 overflow-visible" />
            </button>
          ))}
        </div>
        <ModeRow />
      </section>
      <NavigationBar />
      {/* Edge panel handle lying over the screen */}
      <div className="absolute right-0 bottom-[920px] h-[486px] w-3 rounded-l-xl bg-[#b4afaa]/72" />
    </div>
  );
}
